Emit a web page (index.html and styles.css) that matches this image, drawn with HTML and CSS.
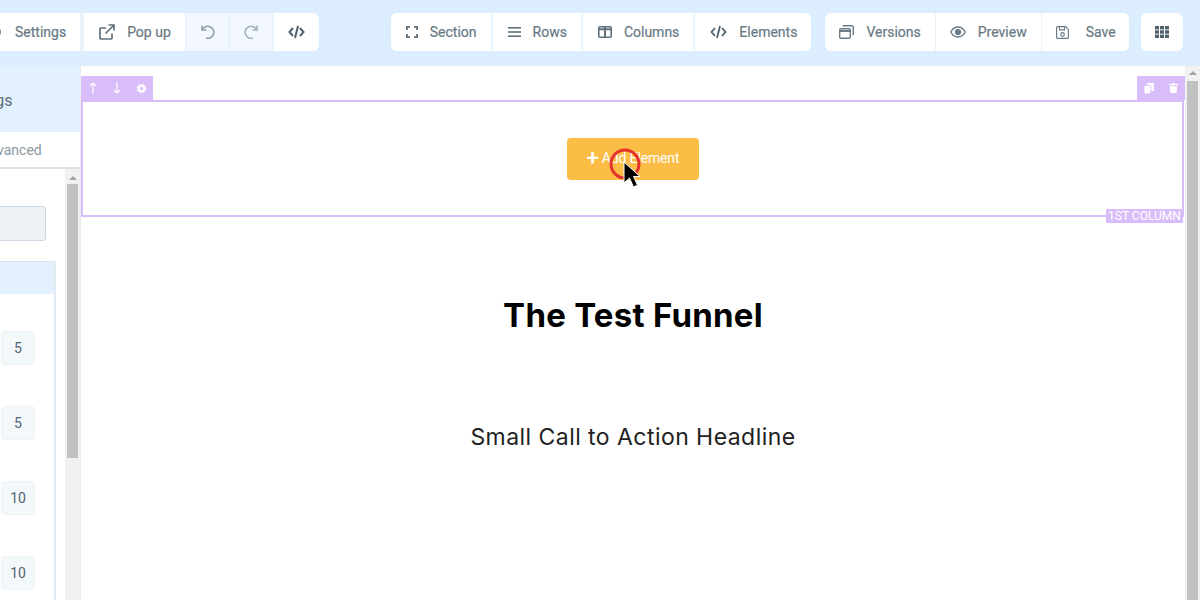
FILE: index.html
```html
<!DOCTYPE html>
<html lang="en">
<head>
<meta charset="utf-8">
<title>The Test Funnel</title>
<link rel="stylesheet" href="styles.css">
</head>
<body>
<header class="toolbar">
  <div class="group group-first">
    <div class="btn"><svg class="ico" width="16" height="16" viewBox="0 0 16 16"><circle cx="8" cy="8" r="4.5" fill="none" stroke="#6b7c88" stroke-width="3"/></svg><span>Settings</span></div>
    <div class="btn btn-popup"><svg class="ico" width="16" height="16" viewBox="0 0 16 16" fill="none" stroke="#5f717d" stroke-width="1.7"><path d="M13 9.500V14a1 1 0 0 1-1 1H2a1 1 0 0 1-1-1V5a1 1 0 0 1 1-1h5"/><path d="M6.500 9.500 14.500 1.500M9.500 1h5.500v5.500"/></svg><span>Pop up</span></div>
    <div class="btn btn-soft btn-undo"><svg class="ico" width="16" height="16" viewBox="0 0 16 16" fill="none" stroke="#8fa0ac" stroke-width="1.6"><path d="M2 1.500v4.500h4.500"/><path d="M2.300 6A6 6 0 1 1 6 14"/></svg></div>
    <div class="btn btn-soft btn-undo"><svg class="ico" width="16" height="16" viewBox="0 0 16 16" fill="none" stroke="#a3b1bb" stroke-width="1.6"><path d="M14 1.500v4.500h-4.500"/><path d="M13.700 6A6 6 0 1 0 10 14"/></svg></div>
    <div class="btn btn-code"><svg class="ico" width="17" height="14" viewBox="0 0 17 14" fill="none" stroke="#4f616d" stroke-width="2"><path d="M5 3 1.500 7 5 11M12 3l3.500 4L12 11M10 1 7 13"/></svg></div>
  </div>

  <div class="group group-mid">
    <div class="btn"><svg class="ico" width="12" height="12" viewBox="0 0 12 12" fill="none" stroke="#5f717d" stroke-width="1.800"><path d="M.9 4V.9H4M8 .9h3.100V4M11.100 8v3.100H8M4 11.100H.9V8"/></svg><span>Section</span></div>
    <div class="btn"><svg class="ico" width="13" height="12" viewBox="0 0 13 12" fill="#5f717d"><rect y="1" width="13" height="1.600"/><rect y="5.200" width="13" height="1.600"/><rect y="9.400" width="13" height="1.600"/></svg><span>Rows</span></div>
    <div class="btn"><svg class="ico" width="14" height="12" viewBox="0 0 14 12" fill="none" stroke="#5f717d" stroke-width="1.600"><rect x=".8" y=".8" width="12.400" height="10.400" rx="1"/><path d="M7 1v10M1 3.200h12" stroke-width="2"/></svg><span>Columns</span></div>
    <div class="btn"><svg class="ico" width="17" height="14" viewBox="0 0 17 14" fill="none" stroke="#4f616d" stroke-width="1.800"><path d="M5 3 1.500 7 5 11M12 3l3.500 4L12 11M10 1 7 13"/></svg><span>Elements</span></div>
  </div>

  <div class="group group-right">
    <div class="btn"><svg class="ico" width="15" height="14" viewBox="0 0 15 14" fill="none" stroke="#6b7c88" stroke-width="1.400"><rect x=".7" y="3.700" width="10.600" height="9.600" rx="1.200"/><path d="M.7 6h10.600" stroke-width="2.200"/><path d="M3.700.7h9.100a1.500 1.500 0 0 1 1.500 1.500v8"/></svg><span>Versions</span></div>
    <div class="btn"><svg class="ico" width="16" height="12" viewBox="0 0 16 12" fill="none" stroke="#6b7c88" stroke-width="1.400"><path d="M.8 6C2.500 2.800 5 1 8 1s5.500 1.800 7.200 5C13.500 9.200 11 11 8 11S2.500 9.200.8 6Z"/><circle cx="8" cy="6" r="2.400" fill="#6b7c88"/></svg><span>Preview</span></div>
    <div class="btn btn-save"><svg class="ico" width="13" height="13" viewBox="0 0 13 13" fill="none" stroke="#6b7c88" stroke-width="1.200"><path d="M1.600.6h8L12.400 3.400v8a1 1 0 0 1-1 1H1.600a1 1 0 0 1-1-1v-9.800a1 1 0 0 1 1-1Z"/><path d="M3.500.8v3h5v-3"/><circle cx="6.500" cy="8.500" r="1.800"/></svg><span>Save</span></div>
  </div>

  <div class="group group-apps">
    <div class="btn btn-grid"><svg width="14" height="12" viewBox="0 0 14 12" fill="#4f616d"><rect width="4" height="3.400"/><rect x="5" width="4" height="3.400"/><rect x="10" width="4" height="3.400"/><rect y="4.300" width="4" height="3.400"/><rect x="5" y="4.300" width="4" height="3.400"/><rect x="10" y="4.300" width="4" height="3.400"/><rect y="8.600" width="4" height="3.400"/><rect x="5" y="8.600" width="4" height="3.400"/><rect x="10" y="8.600" width="4" height="3.400"/></svg></div>
  </div>
</header>

<div class="workspace">
  <aside class="sidebar">
    <div class="side-head"><span class="side-title">Settings</span></div>
    <div class="side-tabs"><span class="side-tab">Advanced</span></div>
    <div class="side-body">
      <div class="side-content">
        <div class="side-input"></div>
        <div class="panel">
          <div class="panel-head"></div>
          <div class="panel-body">
            <div class="num">5</div>
            <div class="num">5</div>
            <div class="num">10</div>
            <div class="num">10</div>
          </div>
        </div>
      </div>
      <div class="scroll scroll-side">
        <div class="scroll-arrow"></div>
        <div class="thumb thumb-side"></div>
      </div>
    </div>
  </aside>

  <main class="canvas">
    <section class="column-wrap">
      <div class="column">
        <div class="tab tab-left">
          <svg width="10" height="12" viewBox="0 0 10 12" fill="none" stroke="#fff" stroke-width="1.200"><path d="M5 11.500V1M2 4l3-3 3 3"/></svg>
          <svg width="10" height="12" viewBox="0 0 10 12" fill="none" stroke="#fff" stroke-width="1.200"><path d="M5 .5V11M2 8l3 3 3-3"/></svg>
          <svg width="11" height="11" viewBox="0 0 11 11" fill="none" stroke="#fff"><circle cx="5.500" cy="5.500" r="2.800" stroke-width="2"/><circle cx="5.500" cy="5.500" r="4.400" stroke-width="1.300" stroke-dasharray="1.700 1.750"/></svg>
        </div>
        <div class="tab tab-right">
          <svg width="10" height="11" viewBox="0 0 11 12" fill="#fff"><rect x="3" y="0" width="8" height="9" rx="1"/><rect x="0" y="2.500" width="7.500" height="9.500" rx="1" stroke="#d9bdfb"/></svg>
          <svg width="9" height="10" viewBox="0 0 10 11" fill="#fff"><rect y="1" width="10" height="1.500"/><rect x="3.500" width="3" height="1.500"/><path d="M1 3.500h8l-.6 7.500H1.600Z"/></svg>
        </div>
        <div class="add-wrap">
          <div class="add-btn"><span class="plus">+</span><span class="add-text">Add Element</span></div>
        </div>
        <div class="col-label">1ST COLUMN</div>
        <svg class="pointer" width="36" height="44" viewBox="0 0 36 44">
          <circle cx="16" cy="16" r="14" fill="none" stroke="#e5322d" stroke-width="3"/>
          <path d="M15 14v21l5.500-5 4 9 4-1.800-4-8.700H31Z" fill="#000" stroke="#fff" stroke-width="1"/>
        </svg>
      </div>
    </section>
    <h1 class="headline">The Test Funnel</h1>
    <p class="subline">Small Call to Action Headline</p>
  </main>

  <div class="scroll scroll-main">
    <div class="scroll-arrow"></div>
    <div class="thumb thumb-main"></div>
  </div>
</div>
</body>
</html>
```
FILE: styles.css
```css
* { box-sizing: border-box; }
html, body { margin: 0; height: 100%; overflow: hidden; }
body { font-family: Roboto, "Liberation Sans", sans-serif; background: #fff; width: 1200px; height: 600px; }

.toolbar { height: 66px; background: #dcedfd; display: flex; align-items: flex-start; padding-top: 13px; }
.group { display: flex; gap: 2px; height: 38px; background: #e8f3fd; border-radius: 6px; overflow: hidden; flex: none; }
.group-first { margin-left: -28px; }
.group-mid { margin-left: 72px; }
.group-right { margin-left: 14px; gap: 1px; }
.group-apps { margin-left: 12px; }
.btn { display: flex; align-items: center; gap: 12px; height: 38px; padding: 0 14px 0 15px; background: #fff; color: #687984; font-size: 14px; font-weight: 400; -webkit-text-stroke: .2px #687984; white-space: nowrap; flex: none; }
.group-right .btn { padding: 0 14px; }
.group-right .btn-save { gap: 17px; padding-right: 13px; }
.ico { flex: none; }
.btn-popup { margin-left: 2px; }
.btn-soft { background: #f2f8fe; }
.btn-undo { width: 41.5px; padding: 0; justify-content: center; }
.btn-code { width: 45px; padding: 0; justify-content: center; }
.btn-grid { width: 42px; padding: 0; justify-content: center; }

.workspace { display: flex; height: 534px; }
.sidebar { width: 81px; flex: none; display: flex; flex-direction: column; border-right: 1px solid #e7ecf0; overflow: hidden; }
.side-head { height: 66px; background: #e3f1fe; display: flex; align-items: center; padding-top: 2px; flex: none; }
.side-title { margin-left: -46px; font-size: 16px; font-weight: 400; color: #5f6e78; }
.side-tabs { height: 37px; flex: none; display: flex; align-items: center; border-bottom: 2px solid #d7e1ea; }
.side-tab { margin-left: -20px; font-size: 14px; color: #8a96a0; }
.side-body { flex: 1; display: flex; min-height: 0; }
.side-content { width: 65px; flex: none; padding-top: 37px; overflow: hidden; }
.side-input { width: 46px; height: 35px; background: #edf2f6; border: 1px solid #ccd8e5; border-left: 0; border-radius: 0 4px 4px 0; }
.panel { width: 56px; margin-top: 20px; border-right: 2px solid #e3ebf2; height: 400px; }
.panel-head { height: 33px; background: #e3f1fe; border-top: 1px solid #d4e3f0; }
.panel-body { display: flex; flex-direction: column; gap: 41px; padding: 37px 0 0 1px; }
.num { width: 34px; height: 34px; background: #f3f8fb; border: 1px solid #edf3f7; border-radius: 4px; display: flex; align-items: center; justify-content: center; font-size: 14px; font-weight: 400; color: #55636d; }

.scroll { background: #f1f1f1; flex: none; display: flex; flex-direction: column; align-items: center; }
.scroll-side { width: 15px; padding-top: 7px; }
.scroll-main { width: 15px; padding-top: 5px; }
.scroll-arrow { width: 0; height: 0; border-left: 4px solid transparent; border-right: 4px solid transparent; border-bottom: 4px solid #a3a3a3; flex: none; }
.thumb { background: #c1c1c1; width: 11px; flex: none; }
.thumb-side { height: 274px; margin-top: 4px; }
.thumb-main { height: 520px; margin-top: 6px; }

.canvas { flex: 1; min-width: 0; position: relative; background: #fff; overflow: hidden; }
.column-wrap { padding-top: 34px; }
.column { position: relative; width: 1103px; height: 117px; border: 2px solid #d9bdfb; }
.tab { position: absolute; top: -26px; height: 24px; background: #d9bdfb; display: flex; align-items: center; }
.tab-left { left: -2px; width: 72px; padding-left: 7px; gap: 14px; }
.tab-right { right: -3px; width: 48px; padding-left: 7px; gap: 15px; }
.add-wrap { display: flex; justify-content: center; padding-top: 36px; }
.add-btn { width: 132px; height: 42px; padding: 0 0 2px 1px; background: #fbbd46; border-radius: 4px; color: #fff; font-size: 14px; font-weight: 400; display: flex; align-items: center; justify-content: center; gap: 3px; }
.add-text { letter-spacing: -.15px; }
.plus { font-size: 22px; font-weight: 500; line-height: 1; }
.col-label { position: absolute; right: -1px; bottom: -8px; width: 77px; height: 14px; background: #d9bdfb; color: #fff; font-size: 12px; line-height: 14px; text-align: center; white-space: nowrap; border-radius: 1px; }
.pointer { position: absolute; left: 526px; top: 46px; }

.headline { margin: 77px 0 0; text-align: center; font-family: Inter, "Open Sans", sans-serif; font-size: 33px; font-weight: 700; letter-spacing: .25px; line-height: 42px; color: #000; }
.subline { margin: 86px 0 0; text-align: center; font-family: Inter, "Open Sans", sans-serif; font-size: 23px; font-weight: 400; letter-spacing: .45px; line-height: 30px; color: #222; }
```
